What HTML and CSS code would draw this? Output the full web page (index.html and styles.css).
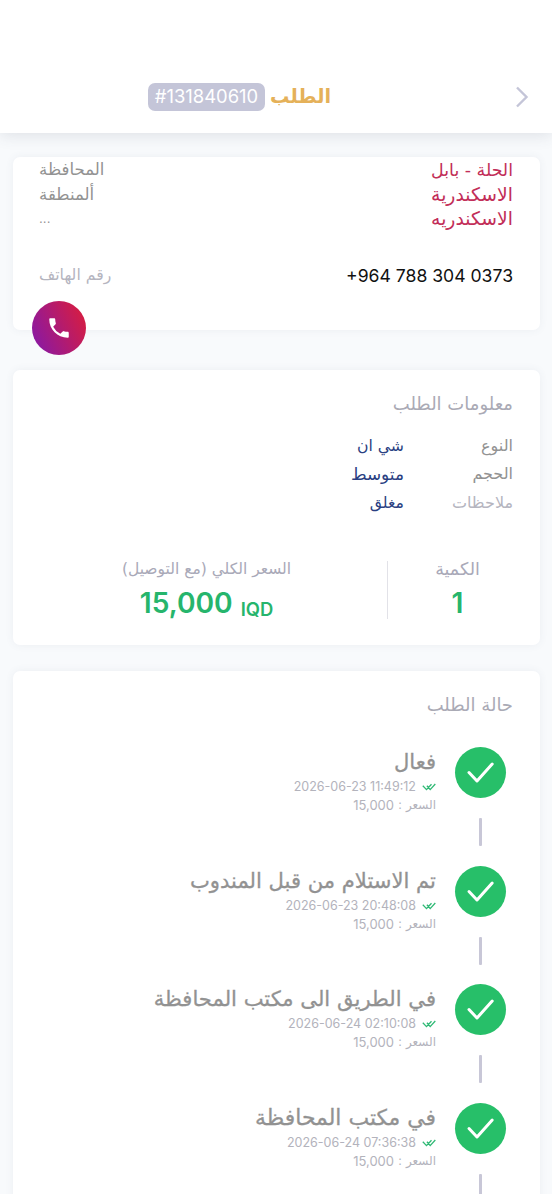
FILE: index.html
```html
<!DOCTYPE html>
<html lang="ar" dir="rtl">
<head>
<meta charset="utf-8">
<title>الطلب</title>
<link rel="stylesheet" href="styles.css">
</head>
<body>
<svg class="defs" width="0" height="0">
  <symbol id="check" viewBox="0 0 51 51"><path d="M14 25.500 22 34 37.200 17" fill="none" stroke="#fff" stroke-width="3" stroke-linecap="round" stroke-linejoin="round"/></symbol>
  <symbol id="double" viewBox="0 0 14 8"><path d="M.8 2.800 4.500 6.600 9.500 1.200M4.900 2.800 8.200 6.600 13.300 1" fill="none" stroke="#2fb975" stroke-width="1.300"/></symbol>
</svg>
<header class="header">
  <svg class="back" viewBox="0 0 14 22"><path d="M2 1.500 11.500 11 2 20.500" fill="none" stroke="#c4c5d8" stroke-width="2.400"/></svg>
  <h1 class="title">الطلب</h1>
  <span class="badge" dir="ltr">#131840610</span>
</header>
<main class="content">
  <section class="card address">
    <div class="row"><span class="place city">الحلة - بابل</span><span class="label">المحافظة</span></div>
    <div class="row"><span class="place">الاسكندرية</span><span class="label">ألمنطقة</span></div>
    <div class="row"><span class="place">الاسكندريه</span><span class="label dots">...</span></div>
    <div class="row phone"><span class="number" dir="ltr">+964 788 304 0373</span><span class="label pale">رقم الهاتف</span></div>
    <a class="call"><svg viewBox="0 0 24 24"><path fill="#fff" d="M20 15.500c-1.250 0-2.450-.2-3.570-.57a1.020 1.020 0 0 0-1.020.24l-2.200 2.200a15.050 15.050 0 0 1-6.590-6.580l2.200-2.210c.28-.27.36-.66.25-1.010A11.360 11.360 0 0 1 8.500 4c0-.55-.45-1-1-1H4c-.55 0-1 .45-1 1 0 9.390 7.610 17 17 17 .55 0 1-.45 1-1v-3.500c0-.55-.45-1-1-1z"/></svg></a>
  </section>
  <section class="card info">
    <h2 class="heading">معلومات الطلب</h2>
    <div class="detail"><span class="label">النوع</span><span class="value">شي ان</span></div>
    <div class="detail"><span class="label">الحجم</span><span class="value size">متوسط</span></div>
    <div class="detail"><span class="label pale">ملاحظات</span><span class="value">مغلق</span></div>
    <div class="totals">
      <div class="quantity"><span class="caption">الكمية</span><strong class="amount">1</strong></div>
      <div class="price"><span class="caption">السعر الكلي (مع التوصيل)</span><span class="sum" dir="ltr"><strong class="amount">15,000</strong><span class="currency">IQD</span></span></div>
    </div>
  </section>
  <section class="card status">
    <h2 class="heading">حالة الطلب</h2>
    <div class="step">
      <div class="mark"><svg class="circle"><use href="#check"/></svg><i class="line"></i></div>
      <div class="text"><h3 class="name">فعال</h3><p class="date"><svg class="double"><use href="#double"/></svg><span dir="ltr">2026-06-23 11:49:12</span></p><p class="cost"><span>السعر :</span><span class="digits">15,000</span></p></div>
    </div>
    <div class="step">
      <div class="mark"><svg class="circle"><use href="#check"/></svg><i class="line"></i></div>
      <div class="text"><h3 class="name">تم الاستلام من قبل المندوب</h3><p class="date"><svg class="double"><use href="#double"/></svg><span dir="ltr">2026-06-23 20:48:08</span></p><p class="cost"><span>السعر :</span><span class="digits">15,000</span></p></div>
    </div>
    <div class="step">
      <div class="mark"><svg class="circle"><use href="#check"/></svg><i class="line"></i></div>
      <div class="text"><h3 class="name">في الطريق الى مكتب المحافظة</h3><p class="date"><svg class="double"><use href="#double"/></svg><span dir="ltr">2026-06-24 02:10:08</span></p><p class="cost"><span>السعر :</span><span class="digits">15,000</span></p></div>
    </div>
    <div class="step">
      <div class="mark"><svg class="circle"><use href="#check"/></svg><i class="line"></i></div>
      <div class="text"><h3 class="name office">في مكتب المحافظة</h3><p class="date"><svg class="double"><use href="#double"/></svg><span dir="ltr">2026-06-24 07:36:38</span></p><p class="cost"><span>السعر :</span><span class="digits">15,000</span></p></div>
    </div>
  </section>
</main>
</body>
</html>
```
FILE: styles.css
```css
* { box-sizing: border-box; }
body { margin: 0; height: 1194px; overflow: hidden; background: #f8fafc; font-family: "DejaVu Sans", sans-serif; white-space: nowrap; }
h1, h2, h3, p { margin: 0; font-weight: 400; }
.defs { position: absolute; }
.header { height: 133px; padding: 61px 23px 0 0; display: flex; align-items: center; background: #fff; box-shadow: 0 3px 14px rgba(60, 70, 90, .13); }
.back { width: 14px; height: 22px; }
.title { margin-right: 184px; width: 60px; font-size: 19.300px; font-weight: 700; line-height: 26px; padding-bottom: 1px; color: #e5b159; }
.badge { margin-right: 6px; width: 117px; height: 28px; border-radius: 7px; background: #c4c5d8; color: #fff; font: 400 18.400px/26px Inter, sans-serif; text-align: center; }
.content { padding: 24px 12px 0 13px; }
.card { background: #fff; border-radius: 7px; box-shadow: 0 0 8px rgba(70, 80, 110, .07); }
.address { position: relative; height: 173px; padding: 1px 27px 0 26px; }
.row { height: 24.500px; display: flex; align-items: center; justify-content: space-between; line-height: 24px; }
.place { color: #c22e58; font-size: 18.800px; }
.place.city { font-size: 17.400px; }
.label { color: #929292; font-size: 16.600px; }
.label.dots { font-size: 12px; }
.label.pale { color: #b5b5bf; font-size: 15.700px; }
.phone { margin-top: 31.500px; }
.number { padding-top: 2px; color: #111; font: 400 17.600px/24px Inter, sans-serif; }
.call { position: absolute; left: 19px; bottom: -25px; width: 54px; height: 54px; border-radius: 50%; display: flex; align-items: center; justify-content: center; background: linear-gradient(65deg, #8218ad, #d51d43 90%); }
.call svg { width: 26px; height: 26px; }
.info { margin-top: 40px; height: 275px; padding: 20px 27px 0 0; }
.heading { height: 28px; line-height: 28px; font-size: 18px; color: #aaaab5; }
.info .heading { margin-bottom: 13.500px; }
.detail { height: 28.300px; display: flex; align-items: center; }
.detail .label { width: 109px; font-size: 16px; }
.value { color: #2a3f82; font-size: 15.700px; }
.value.size { font-size: 16.900px; }
.totals { margin-top: 45px; height: 58px; display: flex; margin-right: -27px; padding-right: 13px; }
.totals > div { display: flex; flex-direction: column; align-items: center; }
.quantity { width: 140px; border-left: 1px solid #e2e2e8; }
.price { width: 361px; }
.caption { color: #a9a9b8; font-size: 15.500px; line-height: 17px; }
.quantity .caption { font-size: 17.500px; }
.amount { color: #26b56c; font: 600 28.200px/38px Inter, sans-serif; margin-top: 6px; }
.sum { display: flex; gap: 8px; align-items: baseline; }
.currency { color: #26b56c; font: 600 18.400px/20px Inter, sans-serif; position: relative; top: 3px; }
.status { margin-top: 26px; height: 560px; padding: 20px 27px 0 0; }
.status .heading { margin-bottom: 28px; }
.step { height: 118.700px; display: flex; }
.mark { width: 65px; display: flex; flex-direction: column; align-items: center; }
.circle { width: 51px; height: 51px; border-radius: 50%; background: #27bf69; }
.line { width: 2.500px; height: 28px; margin-top: 20px; border-radius: 1px; background: #c8c7d7; }
.text { padding-right: 12px; }
.name { height: 31px; line-height: 30px; font-size: 21.100px; color: #929292; -webkit-text-stroke: .3px #929292; }
.name.office { font-size: 21.900px; }
.date { height: 18px; display: flex; align-items: center; gap: 6px; color: #b3b3bc; font: 400 12.500px/18px Inter, sans-serif; }
.double { width: 14px; height: 8px; }
.cost { height: 18px; display: flex; align-items: center; gap: 4px; color: #b3b3bc; font-size: 12px; }
.digits { font: 400 13px/18px Inter, sans-serif; }
```
